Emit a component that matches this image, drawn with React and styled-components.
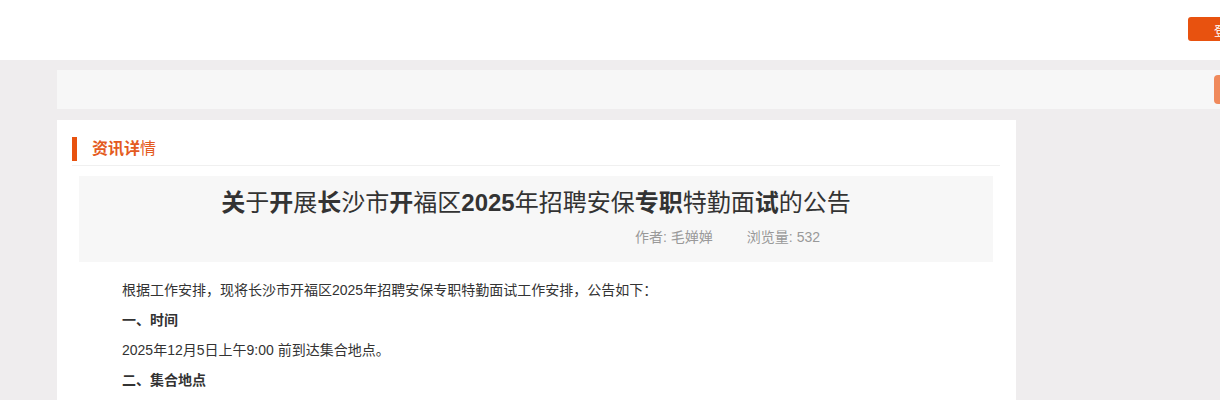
import React from "react";
import styled, { createGlobalStyle } from "styled-components";

const Global = createGlobalStyle`
  html, body { margin: 0; padding: 0; }
  body {
    background: #efedee;
    font-family: "Liberation Sans", "Noto Sans CJK SC", sans-serif;
    color: #333;
    overflow: hidden;
    width: 1220px;
  }
`;

const Page = styled.div`
  width: 1220px;
  overflow: hidden;
  padding-bottom: 40px;
`;

const Header = styled.header`
  height: 60px;
  background: #fff;
  display: flex;
  align-items: flex-start;
  justify-content: flex-end;
  overflow: hidden;
`;

const LoginButton = styled.button`
  margin-top: 17px;
  margin-right: -40px;
  width: 72px;
  height: 24px;
  border: none;
  border-radius: 3px;
  background: #e8520f;
  color: #fff;
  font-family: inherit;
  font-size: 13px;
  padding: 0 0 0 26px;
  text-align: left;
  white-space: nowrap;
`;

const NavBar = styled.div`
  margin: 10px 0 0 57px;
  width: 1200px;
  height: 39px;
  background: #f7f7f7;
  display: flex;
  align-items: center;
  justify-content: flex-end;
  padding-right: 3px;
  box-sizing: border-box;
`;

const NavAction = styled.div`
  width: 40px;
  height: 29px;
  border-radius: 4px;
  background: #f08a5c;
`;

const Card = styled.main`
  margin: 11px 0 0 57px;
  width: 959px;
  background: #fff;
  padding: 17px 16px 0 15px;
  box-sizing: border-box;
  min-height: 300px;
`;

const SectionHead = styled.div`
  display: flex;
  align-items: center;
  gap: 15px;
  padding-bottom: 4px;
  border-bottom: 1px solid #f0f0f0;
`;

const Accent = styled.span`
  width: 5px;
  height: 24px;
  background: #e8520f;
`;

const SectionTitle = styled.h2`
  margin: 0;
  font-size: 16px;
  line-height: 24px;
  font-weight: normal;
  color: #e45a20;
  b { font-weight: bold; }
`;

const TitleBox = styled.div`
  margin: 10px 7px 0 7px;
  background: #f7f7f7;
  padding: 9px 0 15px;
`;

const Title = styled.h1`
  margin: 0;
  font-size: 24px;
  line-height: 36px;
  font-weight: normal;
  text-align: center;
  color: #333;
  b { font-weight: bold; }
`;

const Meta = styled.div`
  margin-top: 6px;
  display: flex;
  justify-content: flex-end;
  gap: 34px;
  padding-right: 173px;
  font-size: 14px;
  line-height: 20px;
  color: #999;
`;

const Body = styled.div`
  padding: 13px 50px 0 50px;
  font-size: 14px;
  color: #333;
`;

const Para = styled.p`
  margin: 0;
  line-height: 30px;
  font-weight: ${(p) => (p.$strong ? "bold" : "normal")};
`;

export default function App() {
  return (
    <Page>
      <Global />
      <Header>
        <LoginButton>登录</LoginButton>
      </Header>
      <NavBar>
        <NavAction />
      </NavBar>
      <Card>
        <SectionHead>
          <Accent />
          <SectionTitle>
            <b>资讯详</b>情
          </SectionTitle>
        </SectionHead>
        <TitleBox>
          <Title>
            <b>关</b>于<b>开</b>展<b>长</b>沙市<b>开</b>福区<b>2025</b>年招聘安保<b>专职</b>特勤面<b>试</b>的公告
          </Title>
          <Meta>
            <span>作者: 毛婵婵</span>
            <span>浏览量: 532</span>
          </Meta>
        </TitleBox>
        <Body>
          <Para>根据工作安排，现将长沙市开福区2025年招聘安保专职特勤面试工作安排，公告如下：</Para>
          <Para $strong>一、时间</Para>
          <Para>2025年12月5日上午9:00 前到达集合地点。</Para>
          <Para $strong>二、集合地点</Para>
        </Body>
      </Card>
    </Page>
  );
}
